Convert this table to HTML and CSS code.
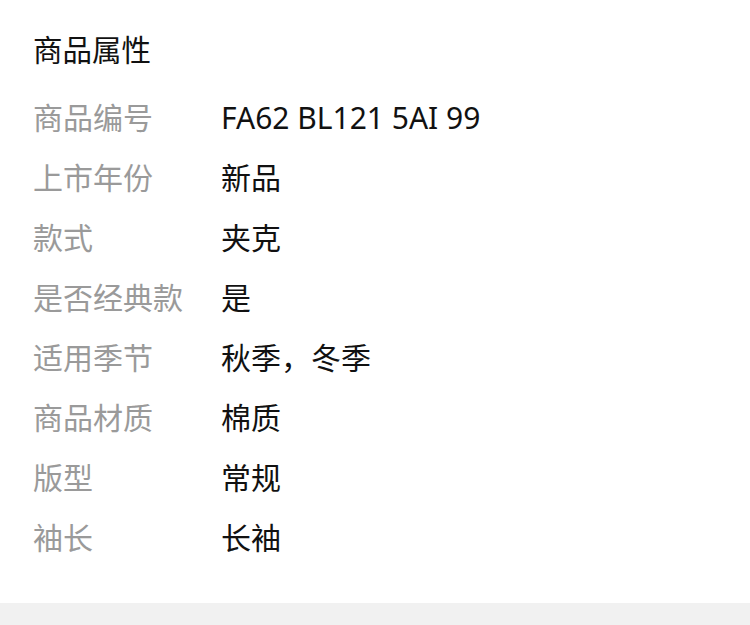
FILE: index.html
```html
<!DOCTYPE html>
<html lang="zh">
<head>
<meta charset="utf-8">
<link rel="stylesheet" href="styles.css">
</head>
<body>
<div class="panel">
  <div class="title">商品属性</div>
  <div class="rows">
    <div class="row"><span class="label">商品编号</span><span class="value">FA62 BL121 5AI 99</span></div>
    <div class="row"><span class="label">上市年份</span><span class="value">新品</span></div>
    <div class="row"><span class="label">款式</span><span class="value">夹克</span></div>
    <div class="row"><span class="label">是否经典款</span><span class="value">是</span></div>
    <div class="row"><span class="label">适用季节</span><span class="value">秋季，冬季</span></div>
    <div class="row"><span class="label">商品材质</span><span class="value">棉质</span></div>
    <div class="row"><span class="label">版型</span><span class="value">常规</span></div>
    <div class="row"><span class="label">袖长</span><span class="value">长袖</span></div>
  </div>
</div>
<div class="footer"></div>
</body>
</html>
```
FILE: styles.css
```css
html, body {
  margin: 0;
  padding: 0;
  background: #ffffff;
}
body {
  font-family: "Noto Sans", "Noto Sans CJK SC", sans-serif;
  width: 750px;
  height: 625px;
  overflow: hidden;
}
.panel {
  padding: 20px 0 35px 33px;
  height: 548px;
}
.title {
  font-size: 29.5px;
  line-height: 60px;
  height: 60px;
  color: #111;
  margin-bottom: 8px;
}
.rows {
  display: flex;
  flex-direction: column;
}
.row {
  display: flex;
  height: 60px;
  line-height: 60px;
  font-size: 30px;
}
.label {
  width: 188px;
  color: #9a9a9a;
}
.value {
  color: #111;
}
.footer {
  height: 22px;
  background: #f1f1f1;
}
```
